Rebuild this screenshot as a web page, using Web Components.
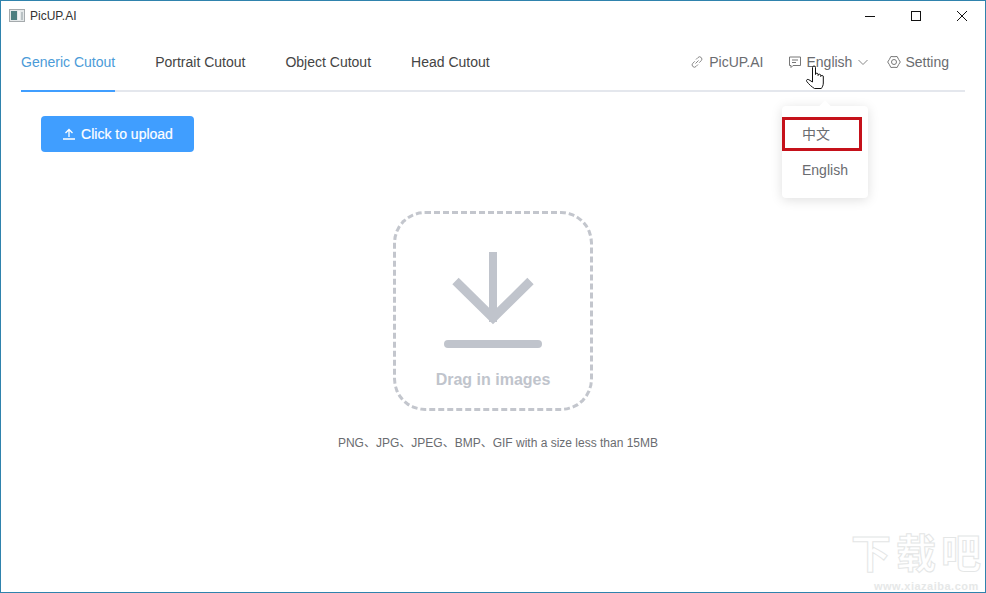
<!DOCTYPE html>
<html>
<head>
<meta charset="utf-8">
<style>
html, body { margin: 0; padding: 0; background: #fff; }
body { font-family: "Liberation Sans", "Noto Sans CJK SC", sans-serif; }
</style>
</head>
<body>
<app-window>
    <title-bar></title-bar>
    <nav-bar></nav-bar>
    <upload-view></upload-view>
</app-window>
<script>
(function () {
'use strict';

function define(name, html) {
    let template = document.createElement('template');
    template.innerHTML = html;
    customElements.define(name, class extends HTMLElement {
        constructor() {
            super();
            this.attachShadow({ mode: 'open' }).appendChild(document.importNode(template.content, true));
        }
    });
}

define('app-window', `
<style>
:host {
  display: block;
  position: relative;
  box-sizing: border-box;
  width: 986px;
  height: 593px;
  border: 1px solid #2f83ad;
  overflow: hidden;
  background: #fff;
}
</style>
<slot></slot>
<water-mark></water-mark>
`);

define('title-bar', `
<style>
:host { display: flex; align-items: center; height: 29px; padding-left: 8px; color: #333; font-size: 12px; }
.logo { margin-right: 5px; }
.title { flex: 1; }
.ctl { display: flex; width: 46px; height: 29px; align-items: center; justify-content: center; }
</style>
<svg class="logo" width="16" height="14" viewBox="0 0 16 14">
  <rect x=".5" y=".5" width="15" height="12" fill="#e4e8e9" stroke="#a5aaad"/>
  <rect x="2" y="2" width="6" height="9" fill="#4d7f80"/>
  <rect x="9" y="2" width="2" height="9" fill="#f4f6f6"/>
  <rect x="12" y="3" width="2" height="8" fill="#b9c1c4"/>
</svg>
<span class="title">PicUP.AI</span>
<span class="ctl"><svg width="12" height="12"><path d="M1 6.500h10" stroke="#111" fill="none"/></svg></span>
<span class="ctl"><svg width="12" height="12"><rect x="1.500" y="1.500" width="9" height="9" stroke="#111" fill="none"/></svg></span>
<span class="ctl"><svg width="12" height="12"><path d="M1 1l10 10M11 1L1 11" stroke="#111" fill="none"/></svg></span>
`);

define('nav-bar', `
<style>
:host {
  display: flex;
  align-items: stretch;
  height: 62px;
  margin: 0 20px;
  border-bottom: 2px solid #e4e7ed;
  box-sizing: border-box;
  font-size: 14px;
  color: #444;
}
.tabs { display: flex; gap: 40px; flex: 1; }
.tab { display: flex; align-items: center; height: 62px; box-sizing: border-box; padding: 4px 0 2px; }
.tab.on { color: #4b9bd8; border-bottom: 2px solid #409eff; padding-bottom: 0; }
.links { display: flex; align-items: center; gap: 26px; color: #6a6c70; padding: 4px 16px 0 0; }
.link { display: flex; align-items: center; gap: 4px; }
.site { gap: 5px; margin-right: -1px; }
.lang { margin-right: -8px; }
.chev { margin-left: 1px; }
svg { display: block; }
</style>
<div class="tabs">
  <span class="tab on">Generic Cutout</span>
  <span class="tab">Portrait Cutout</span>
  <span class="tab">Object Cutout</span>
  <span class="tab">Head Cutout</span>
</div>
<div class="links">
  <span class="link site">
    <svg width="14" height="14" viewBox="0 0 14 14" fill="none" stroke="#888" stroke-width="1">
      <path d="M6 4.500l2-2a2.200 2.200 0 0 1 3.200 3.200l-2 2M8 9.500l-2 2a2.200 2.200 0 0 1-3.200-3.200l2-2M5.500 8.500l3-3"/>
    </svg>
    PicUP.AI
  </span>
  <span class="link lang">
    <svg width="14" height="14" viewBox="0 0 14 14" fill="none" stroke="#777" stroke-width="1">
      <path d="M1.500 2h11v8.500H5l-2 2v-2H1.500zM4 5h6M4 7.500h4"/>
    </svg>
    English
    <svg class="chev" width="12" height="12" viewBox="0 0 12 12" fill="none" stroke="#888"><path d="M1.500 4l4.500 4.500L10.500 4"/></svg>
  </span>
  <span class="link">
    <svg width="14" height="14" viewBox="0 0 14 14" fill="none" stroke="#777" stroke-width="1" stroke-linejoin="round">
      <path d="M13.300 7l-1.710 2.650-1.440 2.810L7 12.300l-3.150.16-1.440-2.810L.7 7l1.710-2.650 1.440-2.810L7 1.700l3.150-.16 1.440 2.810z"/>
      <circle cx="7" cy="7" r="2.500"/>
    </svg>
    Setting
  </span>
</div>
`);

define('upload-view', `
<style>
:host { display: block; position: relative; height: 500px; padding: 24px 0 0 40px; box-sizing: border-box; }
button {
  display: flex; align-items: center; justify-content: center; gap: 5px;
  width: 153px; height: 36px; padding: 0; border: 0; border-radius: 4px;
  background: #409eff; color: #fff; font: 14px "Liberation Sans", sans-serif;
  -webkit-text-stroke: .2px #fff;
}
.center { display: flex; flex-direction: column; align-items: center; margin: 59px 0 0 -40px; }
.zone {
  display: flex; flex-direction: column; align-items: center;
  box-sizing: border-box; width: 200px; height: 200px;
  border: 3px dashed #c3c6cd; border-radius: 32px;
  color: #c0c4cc; font-weight: bold; font-size: 16px;
}
.zone svg { margin-top: 38px; }
.zone span { margin-top: 21px; line-height: 20px; }
.hint { margin: 24px 0 0 10px; font-size: 12px; line-height: 16px; color: #6a6c70; }
</style>
<button>
  <svg width="14" height="12" viewBox="0 0 14 12" fill="none" stroke="#fff" stroke-width="1.300"><path d="M7 9V1.500M3.500 5L7 1.500 10.500 5M1 11h12"/></svg>
  Click to upload
</button>
<div class="center">
  <div class="zone">
    <svg width="98" height="97" viewBox="0 0 98 97">
      <path d="M49 0v70" stroke="#c0c4cc" stroke-width="8" fill="none"/>
      <path d="M11.500 29L49 66l37.500-37" stroke="#c0c4cc" stroke-width="9" fill="none"/>
      <path d="M4 92h90" stroke="#c0c4cc" stroke-width="8" stroke-linecap="round" fill="none"/>
    </svg>
    <span>Drag in images</span>
  </div>
  <div class="hint">PNG、JPG、JPEG、BMP、GIF with a size less than 15MB</div>
</div>
<lang-menu></lang-menu>
`);

define('lang-menu', `
<style>
:host {
  position: absolute; left: 781px; top: 14px;
  display: block; box-sizing: border-box; width: 86px; height: 92px;
  padding: 10px 0; background: #fff; border-radius: 4px;
  box-shadow: 0 2px 12px rgba(0, 0, 0, .13);
  font-size: 14px; color: #6a6c70;
}
:host::before {
  content: ""; position: absolute; left: 39px; top: -4px; width: 8px; height: 8px;
  background: #fff; transform: rotate(45deg);
}
.item { position: relative; height: 36px; line-height: 36px; padding-left: 20px; }
.mark { position: absolute; left: 0; top: 1px; width: 80px; height: 34px; box-sizing: border-box; border: 3px solid #c5111a; }
</style>
<div class="item"><div class="mark"></div>中文</div>
<div class="item">English</div>
`);

define('water-mark', `
<style>
:host { position: absolute; right: 0; bottom: 0; display: block; width: 134px; color: #e6e8e8; pointer-events: none; }
.big { font: bold 40px "Noto Sans CJK SC", sans-serif; color: #fff; -webkit-text-stroke: 1px #e4e6e6; white-space: nowrap; letter-spacing: 5px; }
.url { font: bold 11px/12px "Liberation Sans", sans-serif; padding-left: 23px; letter-spacing: .5px; white-space: nowrap; }
</style>
<div class="big">下载吧</div>
<div class="url">www.xiazaiba.com</div>
`);

define('hand-cursor', `
<style>
:host { position: absolute; left: 805px; top: 65px; display: block; width: 21px; height: 25px; }
svg { display: block; }
</style>
<svg width="21" height="25" viewBox="0 0 21 25" fill="#fff" stroke="#111" stroke-width="1" stroke-linejoin="round">
  <path d="M7.500 14V2.500a1.500 1.500 0 0 1 3 0V9.500a1.300 1.300 0 0 1 2.600 0v1a1.300 1.300 0 0 1 2.600 0v1a1.300 1.300 0 0 1 2.600.5v6c0 2.500-1 4-2 5.500H9.500C7 22 4 19.500 1.800 16.500c-1-1.500.7-2.700 2-1.800L7.500 17z"/>
</svg>
`);

document.body.appendChild(document.createElement('hand-cursor'));
}());
</script>
</body>
</html>
